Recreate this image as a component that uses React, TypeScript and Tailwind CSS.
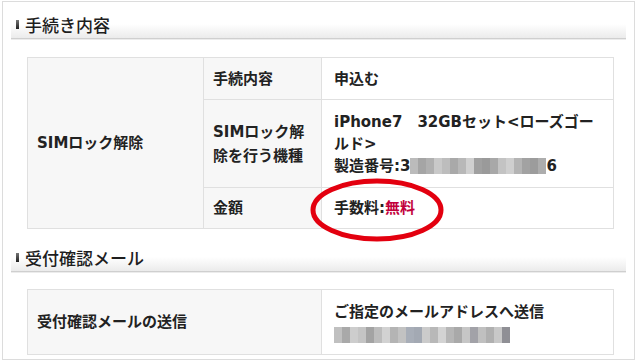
import React from "react";

const font = {
  fontFamily: '"DejaVu Sans", "Noto Sans CJK JP", sans-serif',
};

// section heading with the small dark tab on the left
const Heading = ({ title }: { title: string }) => (
  <div className="mx-2 flex h-[29px] items-center border-b border-[#cfcfcf] bg-gradient-to-b from-white via-white to-[#ebebeb] pl-[5px] shadow-[0_1px_0_#ececec]">
    <span className="mr-[6px] h-[9px] w-[3px] bg-gradient-to-b from-[#777] to-[#222]" />
    <span
      className="text-[17px] font-medium leading-none text-[#1e1e1e]"
      style={{ fontFamily: '"Noto Sans CJK JP", sans-serif' }}
    >
      {title}
    </span>
  </div>
);

// mosaic used to hide private values
const Mosaic = ({ cells }: { cells: string[] }) => (
  <span className="inline-flex h-[16px] align-middle blur-[0.6px]">
    {cells.map((c, i) => (
      <span key={i} className="h-full w-[8px]" style={{ background: c }} />
    ))}
  </span>
);

const serial = [
  "#bbb", "#a5a5a5", "#b0b0b0", "#c9c9c9", "#bdbdbd", "#a9a9a9", "#b8b8b8",
  "#d0d0d0", "#a0a0a0", "#9a9a9a", "#a8a8a8", "#c3c3c3", "#cfcfcf", "#b4b4b4",
  "#a2a2a2", "#9c9c9c", "#adadad",
];

const email = [
  "#c0c0c0", "#a9a9a9", "#cdcdcd", "#c4c4c4", "#a3a3a3", "#bcbcbc", "#d2d2d2",
  "#b4b4b4", "#c2c2c2", "#a8aeb8", "#a3a9b3", "#cbcbcb", "#b8b8b8", "#d3d3d3",
  "#b6b6b6", "#a9a9a9", "#c6c6c6", "#a2a2a8", "#c0c0c0", "#b0b0b0", "#c8c8c8",
  "#8f8f95",
];

const th = "border border-[#e0e0e0] bg-[#f7f7f7] font-bold text-left align-middle";
const td = "border border-[#e0e0e0] bg-white font-bold text-left align-middle";

export default function App() {
  return (
    <div className="h-[361px] w-[640px] bg-white pt-[1px] pl-[2px] text-[#222]" style={font}>
      <div className="relative h-[359px] w-[633px] border border-[#dcdcdc] pt-[8px]">
        <Heading title="手続き内容" />

        <div className="ml-[24px] mt-[18px] w-[587px]">
          <table className="w-full border-collapse text-[15px] leading-[22px]">
            <tbody>
              <tr className="h-[42px]">
                <th rowSpan={3} className={`${th} w-[176px] pl-[9px]`}>
                  SIMロック解除
                </th>
                <th className={`${th} w-[118px] pl-[9px]`}>手続内容</th>
                <td className={`${td} pl-[12px]`}>申込む</td>
              </tr>
              <tr className="h-[88px]">
                <th className={`${th} pl-[9px] leading-[24px]`}>
                  SIMロック解
                  <br />
                  除を行う機種
                </th>
                <td className={`${td} pl-[12px]`}>
                  iPhone7　32GBセット&lt;ローズゴー
                  <br />
                  ルド&gt;
                  <br />
                  製造番号:3<Mosaic cells={serial} />6
                </td>
              </tr>
              <tr className="h-[41px]">
                <th className={`${th} pl-[9px]`}>金額</th>
                <td className={`${td} pl-[12px]`}>
                  手数料:<span className="text-[#c2003c]">無料</span>
                </td>
              </tr>
            </tbody>
          </table>
        </div>

        <div className="mt-[14px]">
          <Heading title="受付確認メール" />
        </div>

        <div className="ml-[24px] mt-[17px] w-[587px]">
          <table className="w-full border-collapse text-[15px] leading-[22px]">
            <tbody>
              <tr className="h-[65px]">
                <th className={`${th} w-[294px] pl-[9px]`}>受付確認メールの送信</th>
                <td className={`${td} pl-[12px] pt-[2px]`}>
                  ご指定のメールアドレスへ送信
                  <br />
                  <Mosaic cells={email} />
                </td>
              </tr>
            </tbody>
          </table>
        </div>

        {/* red marker circling the fee */}
        <svg
          className="pointer-events-none absolute left-[304px] top-[176px]"
          width="140"
          height="66"
          viewBox="0 0 140 66"
        >
          <ellipse cx="70" cy="32" rx="64" ry="29" fill="none" stroke="#e3000f" strokeWidth="5" />
        </svg>
      </div>
    </div>
  );
}
